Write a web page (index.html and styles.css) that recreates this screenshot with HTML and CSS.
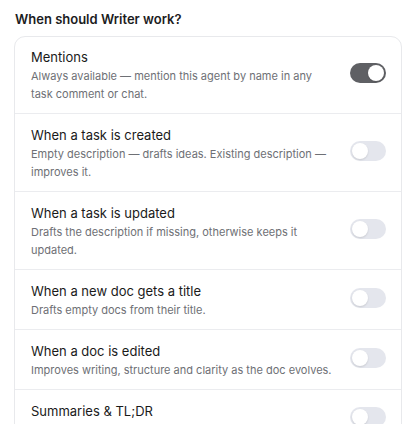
FILE: index.html
```html
<!DOCTYPE html>
<html lang="en">
<head>
<meta charset="utf-8">
<title>Triggers</title>
<link rel="stylesheet" href="styles.css">
</head>
<body>
<section class="panel">
  <h2 class="heading">When should Writer work?</h2>
  <div class="card">
    <div class="row">
      <div class="text">
        <div class="title">Mentions</div>
        <div class="desc">Always available — mention this agent by name in any task comment or chat.</div>
      </div>
      <span class="toggle on"><span class="knob"></span></span>
    </div>
    <div class="row">
      <div class="text">
        <div class="title">When a task is created</div>
        <div class="desc">Empty description — drafts ideas. Existing description — improves it.</div>
      </div>
      <span class="toggle"><span class="knob"></span></span>
    </div>
    <div class="row">
      <div class="text">
        <div class="title">When a task is updated</div>
        <div class="desc">Drafts the description if missing, otherwise keeps it updated.</div>
      </div>
      <span class="toggle"><span class="knob"></span></span>
    </div>
    <div class="row">
      <div class="text">
        <div class="title">When a new doc gets a title</div>
        <div class="desc">Drafts empty docs from their title.</div>
      </div>
      <span class="toggle"><span class="knob"></span></span>
    </div>
    <div class="row">
      <div class="text">
        <div class="title">When a doc is edited</div>
        <div class="desc">Improves writing, structure and clarity as the doc evolves.</div>
      </div>
      <span class="toggle"><span class="knob"></span></span>
    </div>
    <div class="row row-last">
      <div class="text">
        <div class="title">Summaries &amp; TL;DR</div>
      </div>
      <span class="toggle"><span class="knob"></span></span>
    </div>
  </div>
</section>
</body>
</html>
```
FILE: styles.css
```css
html, body {
  margin: 0;
  padding: 0;
  background: #ffffff;
}
body {
  font-family: Inter, "Noto Sans", sans-serif;
  color: #1a1a1a;
  overflow: hidden;
}
.panel {
  padding: 9px 3px 0 14px;
}
.heading {
  margin: 0 0 7px 1px;
  font-size: 13px;
  line-height: 20px;
  font-weight: 600;
  color: #1c1c1e;
}
.card {
  border: 1px solid #e8e9ec;
  border-radius: 11px;
  background: #fff;
}
.row {
  display: flex;
  align-items: center;
  gap: 16px;
  padding: 11px 15px 10px 16px;
  border-top: 1px solid #ebecef;
}
.row:first-child {
  border-top: none;
  padding-top: 10px;
}
.row-last {
  align-items: flex-start;
  padding-bottom: 28px;
}
.row-last .toggle {
  margin: 6px 0 0;
}
.text {
  flex: 1;
  min-width: 0;
}
.title {
  font-size: 13px;
  line-height: 20px;
  font-weight: 400;
  color: #1a1a1a;
}
.desc {
  font-size: 11px;
  line-height: 18px;
  color: #6e7075;
}
.toggle {
  flex: none;
  width: 36px;
  height: 20px;
  border-radius: 10px;
  background: #e4e6ed;
  display: flex;
  align-items: center;
  padding: 0 2px;
  box-sizing: border-box;
  margin-bottom: 5px;
}
.toggle .knob {
  width: 16px;
  height: 16px;
  border-radius: 50%;
  background: #ffffff;
  box-shadow: 0 1px 2px rgba(0, 0, 0, 0.12);
}
.toggle.on {
  background: #5f6064;
  justify-content: flex-end;
}
```
